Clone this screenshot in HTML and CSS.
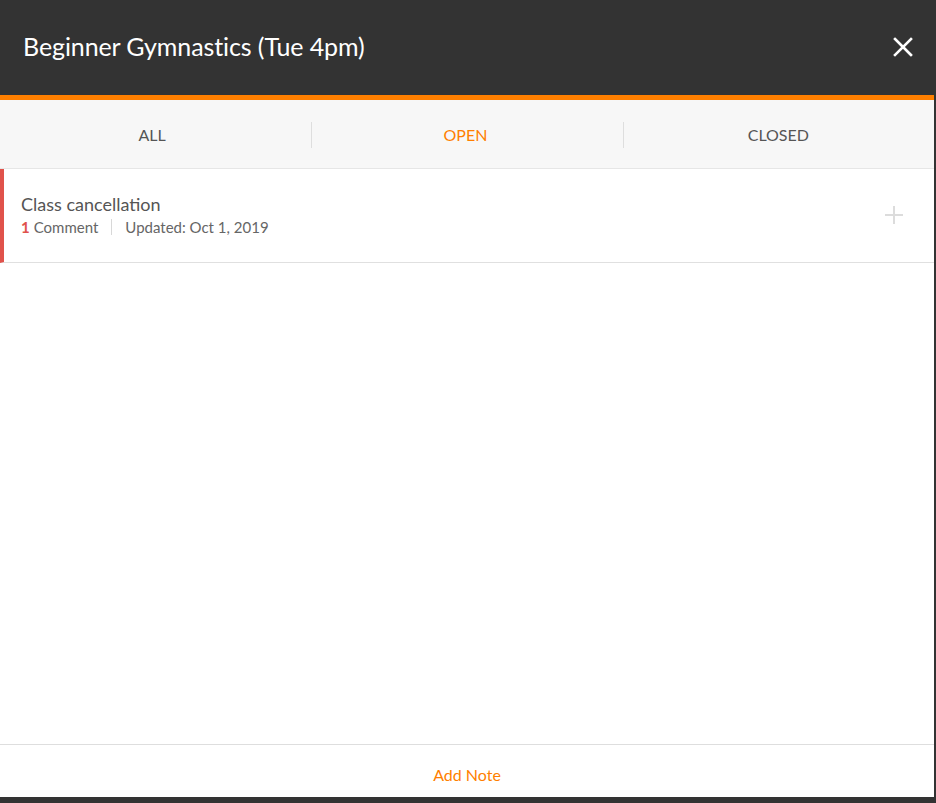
FILE: index.html
```html
<!DOCTYPE html>
<html>
<head>
<meta charset="utf-8">
<link rel="stylesheet" href="styles.css">
</head>
<body>
<div class="modal">
  <header class="modal-header">
    <h1 class="modal-title">Beginner Gymnastics (Tue 4pm)</h1>
    <button class="close-btn" aria-label="Close">
      <svg width="20" height="20" viewBox="0 0 20 20"><path d="M2 2 L18 18 M18 2 L2 18" stroke="#fff" stroke-width="2.6" stroke-linecap="square" fill="none"/></svg>
    </button>
  </header>
  <nav class="tabs">
    <div class="tab tab-all">ALL</div>
    <div class="tab tab-open tab-active">OPEN</div>
    <div class="tab tab-closed">CLOSED</div>
  </nav>
  <main class="notes">
    <div class="note">
      <div class="note-body">
        <div class="note-title">Class cancellation</div>
        <div class="note-meta">
          <span class="count">1</span> Comment
          <span class="sep"></span>
          Updated: Oct 1, 2019
        </div>
      </div>
      <div class="note-plus">
        <svg width="20" height="20" viewBox="0 0 20 20"><path d="M10 1 V19 M1 10 H19" stroke="#dcdcdc" stroke-width="2" fill="none"/></svg>
      </div>
    </div>
  </main>
  <footer class="modal-footer">
    <span class="add-note">Add Note</span>
  </footer>
</div>
</body>
</html>
```
FILE: styles.css
```css
* { box-sizing: border-box; }
html, body { margin: 0; padding: 0; }
body {
  background: #333333;
  font-family: Lato, "Open Sans", sans-serif;
  height: 803px;
  overflow: hidden;
}
.modal {
  width: 934px;
  height: 797px;
  background: #fff;
  display: flex;
  flex-direction: column;
}
.modal-header {
  height: 100px;
  background: #333333;
  border-bottom: 5px solid #ff7f00;
  display: flex;
  align-items: center;
  justify-content: space-between;
  padding: 0 21px 4px 23px;
}
.modal-title {
  margin: 0;
  color: #fff;
  font-weight: 400;
  font-size: 25px;
  letter-spacing: -0.1px;
}
.close-btn {
  background: none;
  border: 0;
  padding: 0;
  width: 20px;
  height: 20px;
  display: flex;
  cursor: pointer;
  margin-top: 2px;
}
.tabs {
  height: 69px;
  background: #f7f7f7;
  border-bottom: 1px solid #e6e6e6;
  display: grid;
  grid-template-columns: 1fr 1fr 1fr;
  align-items: center;
  padding-top: 2px;
}
.tab {
  text-align: center;
  font-size: 16px;
  color: #555;
  line-height: 26px;
  border-left: 1px solid #dedede;
}
.tab:first-child { border-left: 0; }
.tab-all { padding-right: 7px; }
.tab-open { padding-right: 4px; }
.tab-closed { padding-right: 1px; }
.tab-active { color: #ff7f00; }
.notes { flex: 1; }
.note {
  height: 94px;
  border-left: 4px solid #e0524b;
  border-bottom: 1px solid #e0e0e0;
  display: flex;
  align-items: center;
  padding: 0 30px 0 17px;
}
.note-body { flex: 1; margin-top: -1px; }
.note-title {
  font-size: 18px;
  color: #555;
  line-height: 22px;
}
.note-meta {
  font-size: 15px;
  color: #666;
  line-height: 20px;
  margin-top: 2px;
  display: flex;
  align-items: center;
}
.count { color: #e0524b; font-weight: 700; margin-right: 4px; }
.sep {
  display: inline-block;
  width: 1px;
  height: 16px;
  background: #d8d8d8;
  margin: 0 13px 0 13px;
}
.note-plus { display: flex; margin-bottom: 2px; }
.modal-footer {
  height: 53px;
  border-top: 1px solid #dedede;
  display: flex;
  align-items: center;
  justify-content: center;
  padding-top: 6px;
}
.add-note {
  color: #ff7f00;
  font-size: 16px;
}
```
